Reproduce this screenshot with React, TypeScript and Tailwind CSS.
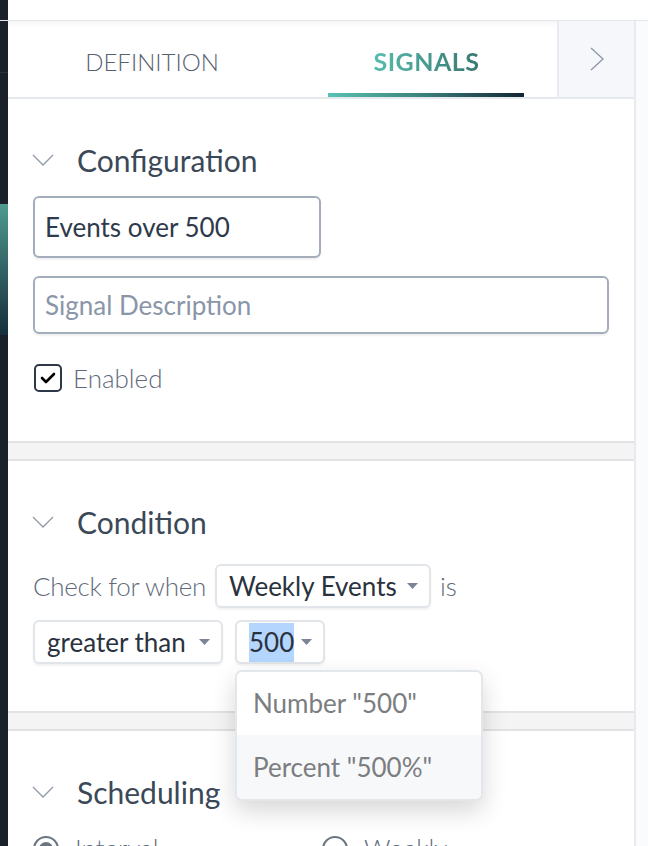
import React from 'react';

const FONT = "font-['Lato','Liberation_Sans',sans-serif]";

function Chevron() {
  return (
    <svg width="22" height="14" viewBox="0 0 22 14" className="shrink-0" aria-hidden>
      <polyline points="1,2 11,12 21,2" fill="none" stroke="#8f99a8" strokeWidth="1.3" />
    </svg>
  );
}

function Caret() {
  return (
    <svg width="11" height="6" viewBox="0 0 11 6" className="shrink-0" aria-hidden>
      <polygon points="0,0 11,0 5.5,6" fill="#7c8595" />
    </svg>
  );
}

function SectionHeader({ title }: { title: string }) {
  return (
    <div className="flex h-10 items-center">
      <div className="ml-[24px] w-[45px]">
        <Chevron />
      </div>
      <span className="text-[30px] leading-10 text-[#3b4858]">{title}</span>
    </div>
  );
}

function Select({ children, className = '' }: { children: React.ReactNode; className?: string }) {
  return (
    <div
      className={`flex h-[44px] shrink-0 items-center justify-between whitespace-nowrap rounded-[6px] border-2 border-[#e1e5ea] bg-white pl-[12px] pr-[11px] text-[26px] font-normal text-[#2a323e] shadow-[0_2px_2px_rgba(0,0,0,0.05)] ${className}`}
    >
      {children}
      <Caret />
    </div>
  );
}

function Divider() {
  return <div className="h-[20px] shrink-0 border-y-2 border-[#e2e2e2] bg-[#f4f4f4]" />;
}

export default function App() {
  return (
    <div className={`relative flex h-[846px] w-[648px] flex-col overflow-hidden bg-white ${FONT}`}>
      {/* top strip */}
      <div className="flex h-[20px] shrink-0">
        <div className="w-[8px] bg-[#1b212a]" />
        <div className="flex-1 bg-white" />
      </div>
      <div className="h-[1px] shrink-0 bg-[#e3e6ea]" />

      <div className="flex min-h-0 flex-1">
        {/* left app rail */}
        <div className="flex w-[8px] shrink-0 flex-col bg-[#1b212a]">
          <div className="mt-[51px] h-[1px] bg-[#2c333d]" />
          <div className="mt-[131px] h-[131px] bg-gradient-to-b from-[#4f9b90] to-[#16303b]" />
        </div>

        {/* panel */}
        <div className="flex w-[626px] shrink-0 flex-col shadow-[inset_0_8px_8px_-8px_rgba(0,0,0,0.08)]">
          {/* tabs */}
          <div className="flex h-[78px] shrink-0 border-b-2 border-[#e5e8ec]">
            <div className="flex w-[288px] items-center justify-center pt-[5px] text-[24px] font-light text-[#566070]">
              DEFINITION
            </div>
            <div className="relative flex w-[261px] items-center justify-center pt-[5px]">
              <span className="bg-gradient-to-r from-[#56bdae] to-[#3a7770] bg-clip-text text-[25px] font-bold tracking-[0.5px] text-transparent">
                SIGNALS
              </span>
              <div className="absolute bottom-0 left-[32px] right-[33px] h-[4px] bg-gradient-to-r from-[#58c2b2] via-[#3a7f78] to-[#132536]" />
            </div>
            <div className="flex flex-1 items-center justify-center border-l-2 border-[#e8ebef] bg-[#f5f7fa]">
              <svg width="16" height="24" viewBox="0 0 16 24" aria-hidden>
                <polyline points="2,1 14,12 2,23" fill="none" stroke="#8c96a6" strokeWidth="1.3" />
              </svg>
            </div>
          </div>

          {/* Configuration */}
          <div className="flex shrink-0 flex-col pb-[49px] pt-[41px]">
            <SectionHeader title="Configuration" />
            <div className="ml-[25px] mt-[16px] flex h-[62px] w-[288px] items-center rounded-[6px] border-2 border-[#a3adbb] px-[10px] text-[26px] text-[#2e3a4b] shadow-[0_2px_2px_rgba(0,0,0,0.06)]">
              Events over 500
            </div>
            <div className="ml-[25px] mt-[18px] flex h-[58px] w-[576px] items-center rounded-[6px] border-2 border-[#a3adbb] px-[10px] text-[26px] text-[#8a96a8] shadow-[0_2px_2px_rgba(0,0,0,0.06)]">
              Signal Description
            </div>
            <div className="ml-[26px] mt-[30px] flex h-[28px] items-center gap-[11px]">
              <div className="flex h-[28px] w-[28px] items-center justify-center rounded-[5px] border-[2.5px] border-[#2d3748]">
                <svg width="16" height="12" viewBox="0 0 16 12" aria-hidden>
                  <polyline points="2,6 6,10 14,2" fill="none" stroke="#000" strokeWidth="2.6" strokeLinecap="round" strokeLinejoin="round" />
                </svg>
              </div>
              <span className="text-[26px] font-light text-[#5f6b7c]">Enabled</span>
            </div>
          </div>

          <Divider />

          {/* Condition */}
          <div className="relative z-10 flex shrink-0 flex-col pb-[47px] pt-[41px]">
            <SectionHeader title="Condition" />
            <div className="ml-[25px] mt-[22px] flex items-center gap-[9px] whitespace-nowrap text-[26px] font-light text-[#5f6b7c]">
              <span className="tracking-[-0.3px]">Check for when</span>
              <Select className="w-[216px]">Weekly Events</Select>
              <span>is</span>
            </div>
            <div className="ml-[25px] mt-[12px] flex items-center gap-[12px]">
              <Select className="w-[190px]">greater than</Select>
              <div className="relative shrink-0">
                <Select className="w-[90px]">
                  <span className="bg-[#b4d5fe]">500</span>
                </Select>
                <div className="absolute left-0 top-[50px] w-[248px] overflow-hidden rounded-[7px] border-2 border-[#e3e6eb] bg-white text-[26px] text-[#7b7d80] shadow-[0_10px_24px_rgba(0,0,0,0.16)]">
                  <div className="flex h-[63px] items-center whitespace-nowrap px-[16px]">Number "500"</div>
                  <div className="flex h-[64px] items-center whitespace-nowrap bg-[#f7f8fa] px-[16px]">Percent "500%"</div>
                </div>
              </div>
            </div>
          </div>

          <Divider />

          {/* Scheduling */}
          <div className="flex shrink-0 flex-col pt-[41px]">
            <SectionHeader title="Scheduling" />
            <div className="ml-[25px] mt-[17px] flex items-center text-[26px] font-light text-[#5f6b7c]">
              <div className="flex w-[289px] items-center gap-[16px]">
                <div className="flex h-[26px] w-[26px] items-center justify-center rounded-full border-2 border-[#6b7483]">
                  <div className="h-[14px] w-[14px] rounded-full bg-[#6b7483]" />
                </div>
                <span>Interval</span>
              </div>
              <div className="flex items-center gap-[16px]">
                <div className="h-[26px] w-[26px] rounded-full border-2 border-[#6b7483]" />
                <span>Weekly</span>
              </div>
            </div>
          </div>
        </div>

        {/* right edge */}
        <div className="w-[2px] shrink-0 bg-[#e8eaee]" />
        <div className="flex-1 bg-[#fafbfc]" />
      </div>
    </div>
  );
}
